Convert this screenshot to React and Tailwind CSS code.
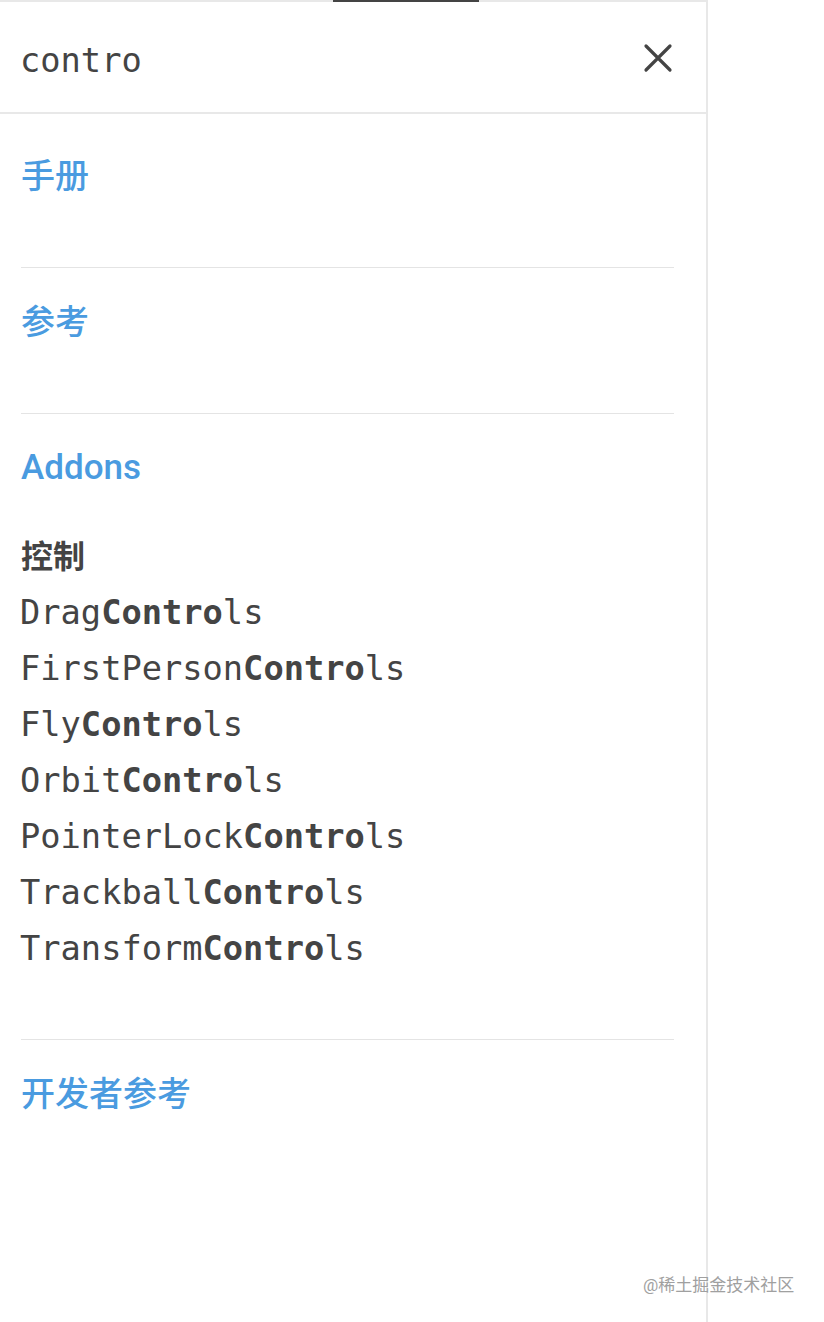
const sans = "font-['Roboto','Noto_Sans_CJK_SC',sans-serif]"
const mono = "font-['DejaVu_Sans_Mono','Noto_Sans_CJK_SC',monospace]"

const controls = [
  ["Drag", "ls"],
  ["FirstPerson", "ls"],
  ["Fly", "ls"],
  ["Orbit", "ls"],
  ["PointerLock", "ls"],
  ["Trackball", "ls"],
  ["Transform", "ls"],
]

function Heading({ children }) {
  return (
    <div className={`${sans} text-[34px] leading-[48px] font-medium text-[#4a9be0]`}>
      {children}
    </div>
  )
}

export default function App() {
  return (
    <div className="relative w-[824px] h-[1322px] bg-white overflow-hidden">
      <div className="w-[708px] h-full border-r-2 border-[#e8e8e8] flex flex-col">
        <div className="h-[2px] bg-[#e8e8e8] flex">
          <div className="ml-[333px] w-[146px] h-[2px] bg-[#444]"></div>
        </div>

        <div className="h-[112px] flex items-center justify-between pl-[20px] pr-[32px] border-b-2 border-[#e8e8e8]">
          <span className={`${mono} text-[33.7px] text-[#444] pt-[9px]`}>contro</span>
          <svg width="32" height="32" viewBox="0 0 32 32" className="mt-[1px]">
            <path d="M4 4 L28 28 M28 4 L4 28" stroke="#444" strokeWidth="3.2" strokeLinecap="round" />
          </svg>
        </div>

        <div className="pl-[21px] pr-[32px]">
          <div className="pt-[38px] pb-[67px]">
            <Heading>手册</Heading>
          </div>

          <div className="border-t border-[#e4e4e4] pt-[30px] pb-[67px]">
            <Heading>参考</Heading>
          </div>

          <div className="border-t border-[#e4e4e4] pt-[30px] pb-[62px]">
            <div className={`${sans} text-[35px] leading-[48px] font-medium text-[#4a9be0]`}>Addons</div>
            <div className="mt-[37px] -ml-[1px]">
              <div className={`${sans} text-[32px] leading-[56px] font-bold text-[#444] ml-[1px]`}>控制</div>
              {controls.map(([pre, post]) => (
                <div key={pre} className={`${mono} text-[33.7px] leading-[56px] text-[#444]`}>
                  {pre}
                  <span className="font-bold">Contro</span>
                  {post}
                </div>
              ))}
            </div>
          </div>

          <div className="border-t border-[#e4e4e4] pt-[30px]">
            <Heading>开发者参考</Heading>
          </div>
        </div>
      </div>

      <div className={`${sans} absolute left-[643px] top-[1273px] text-[17px] leading-[24px] text-[#a0a0a0]`}>
        @稀土掘金技术社区
      </div>
    </div>
  )
}
